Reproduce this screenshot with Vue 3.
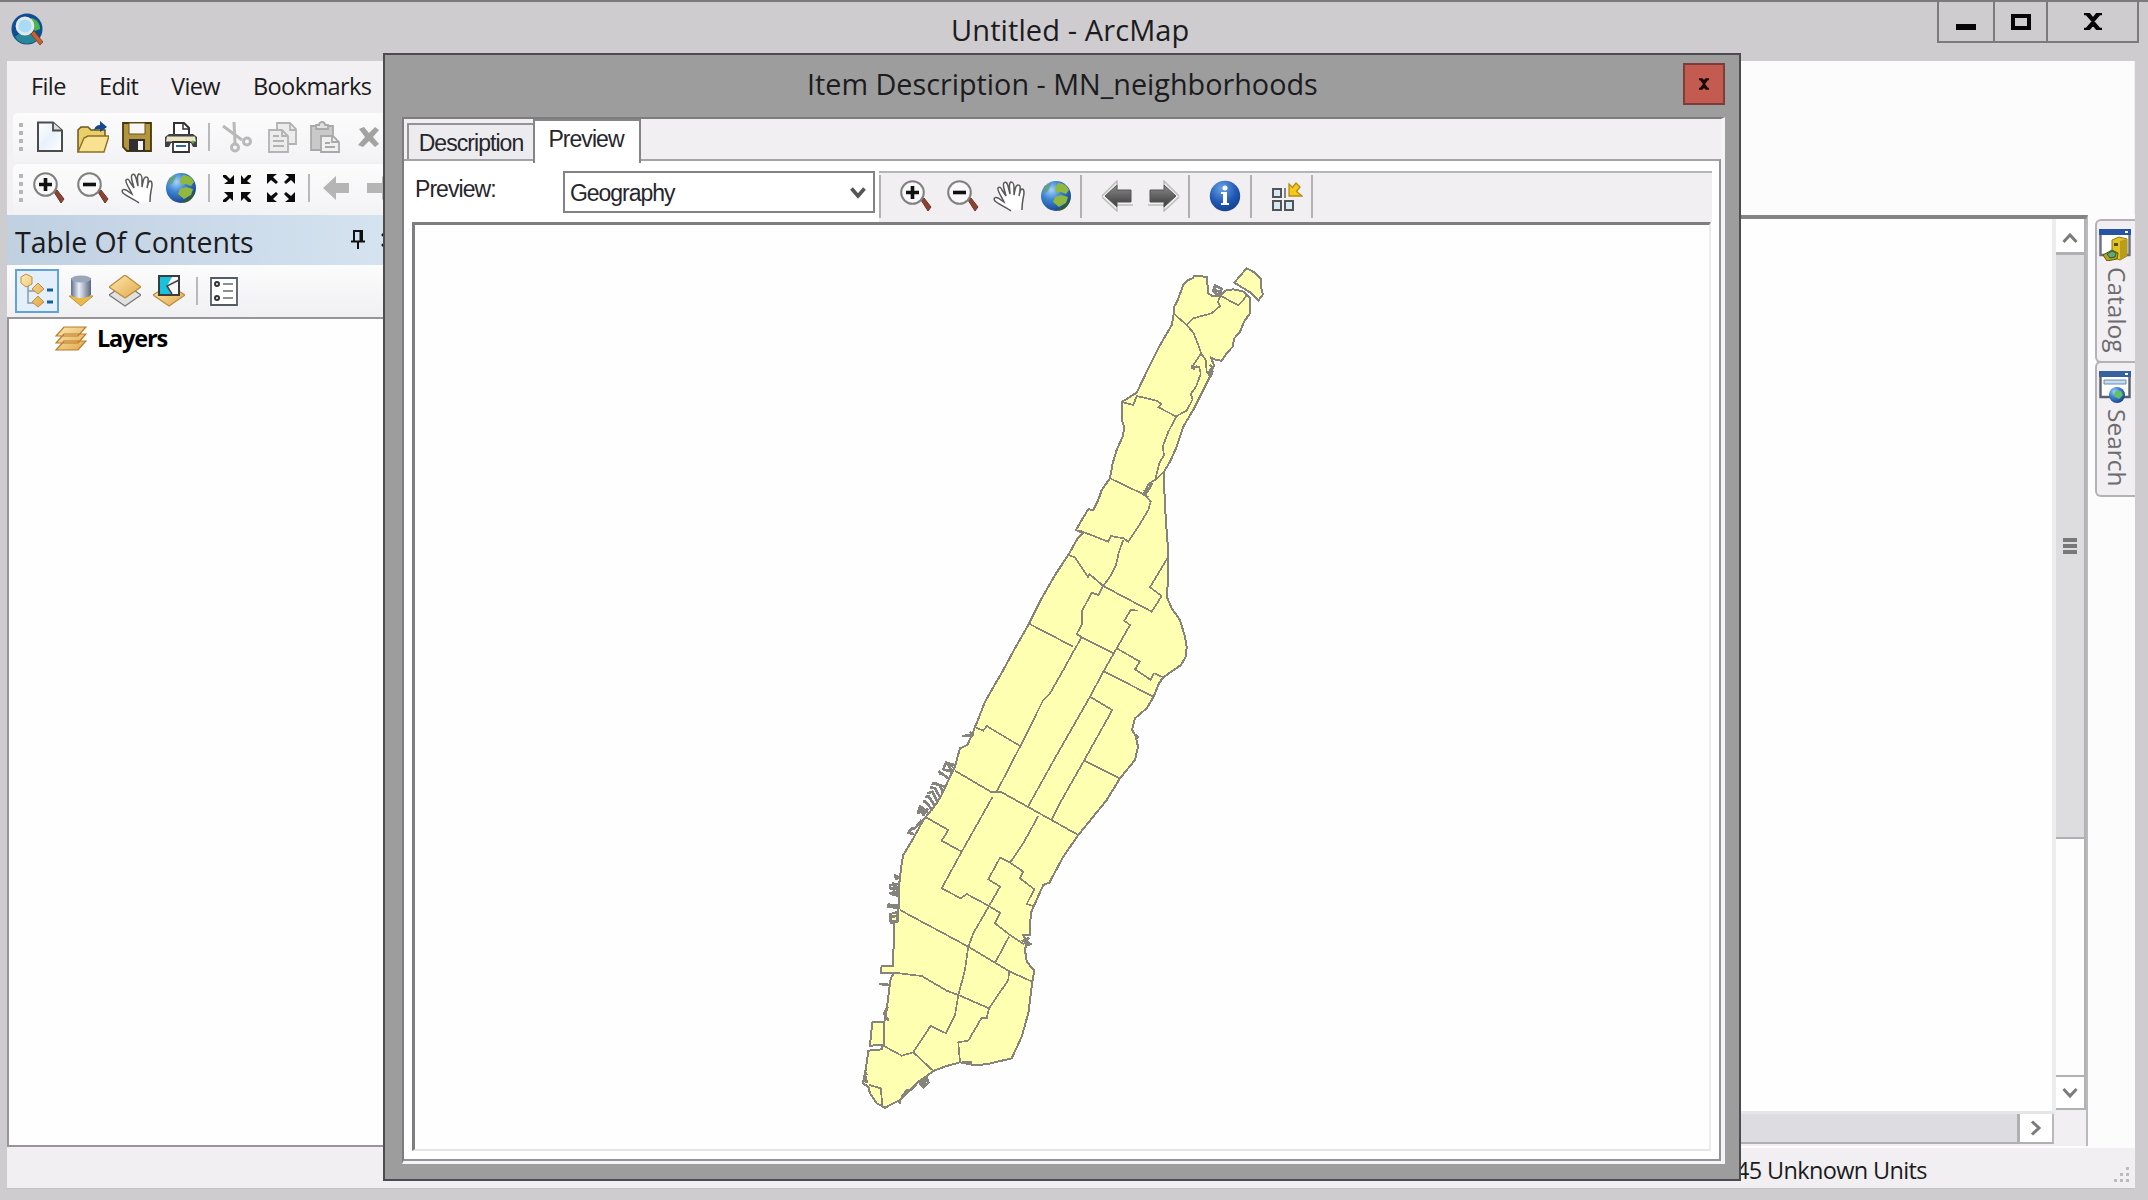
<script setup>
const at = (ox, oy, list) => {
  const n = list.trim().split(/[\s,]+/).map(Number)
  const out = []
  for (let i = 0; i < n.length; i += 2) out.push((ox + n[i] / 3).toFixed(1) + ',' + (oy + n[i + 1] / 3).toFixed(1))
  return out.join(' ')
}
const north = (s) => at(1040, 250, s)
const mid = (s) => at(960, 500, s)
const south = (s) => at(840, 760, s)

const island = [
  north('400,200 403,170 413,150 430,105 445,90 458,85 462,78 500,80 505,130 515,137 540,137 555,122 580,118 612,125 630,145 630,190 612,215 600,245 583,265 578,290 560,310 545,332 528,330 512,322 522,345 510,380 490,420 465,470 430,530 410,590 390,635 372,665 374,755 380,845 384,895'),
  mid('624,180 624,245 620,290 635,325 660,360 675,410 680,440 677,470 663,495 610,532 597,550 580,592 560,625 525,655 516,690 526,705 534,740 525,780 480,835 440,900'),
  south('780,145 715,225 670,290 628,368 610,375 583,435 572,460 570,525 550,525 560,545 555,570 560,605 583,632 577,665 565,760 545,830 515,895 440,913 400,915 360,907 320,918 280,933 230,970 200,1000 180,1020 135,1043 110,1030 90,1000 85,980 68,970 78,925 85,872 127,868 127,855 90,857 97,787 133,787 140,750 145,710 152,655 162,640 122,640 125,618 158,618 163,520 163,490 152,490 150,462 175,455 178,420 178,370 185,310 190,285 220,235 250,180 270,155 290,130 310,95 330,50 345,20 350,0'),
  mid('0,745 22,735 38,700 45,680 52,665 75,605 95,570 130,510 165,445 205,375 245,295 285,225 325,165 355,112 370,100 348,90 365,60 385,28 400,30'),
  north('175,750 185,720 210,685 218,640 230,600 250,555 252,530 247,515 247,455 290,428 320,365 355,295 395,225')
].join(' ')

const islet = north('620,55 645,68 662,85 665,125 670,132 655,152 635,130 583,98 600,78')

const borders = [
  north('400,190 440,225 460,248 475,285 483,310 497,330 500,365 510,380'),
  north('440,225 460,205 515,190 540,168 534,155 542,137'),
  north('542,137 580,158 595,165 612,148 620,135'),
  north('483,310 460,345 456,355 478,350 482,372 468,410 452,432 458,448 440,482 410,498 385,545 368,590 372,615 358,640 345,690 372,665'),
  north('345,690 325,702 310,735 325,742'),
  north('247,457 280,465 290,438 350,452 365,462 355,472 410,500'),
  north('210,685 315,735 332,755 325,780 295,830 265,875 250,865 212,858 205,875 120,842'),
  mid('490,120 477,155 468,195 450,230 430,258 415,285 395,278 365,335 365,375 350,402 365,412 340,455 310,510 270,580 250,600 180,740 110,875'),
  mid('325,165 345,172 385,232 388,222 430,258 575,335 605,288 570,262 622,175'),
  mid('535,332 512,330 493,362 510,375 470,445 430,515 390,590 290,765 215,900 205,920'),
  mid('205,370 340,440'),
  mid('365,412 460,460'),
  mid('470,445 540,485 525,508 572,540 582,520 610,532'),
  mid('432,514 580,590'),
  mid('390,590 457,630 372,782 305,900 275,960'),
  mid('372,782 480,835'),
  mid('42,680 70,692 80,678 180,738'),
  south('345,32 455,97 485,97 715,225'),
  south('457,112 365,275 305,385 362,415 380,402 447,438 480,380 445,358 480,293 510,308 550,335 540,355 583,388 560,432 580,438'),
  south('595,168 550,250 510,308'),
  south('258,172 325,210 305,242 365,275'),
  south('180,450 385,560 510,635 577,665'),
  south('447,438 480,458 465,490 510,525 550,552 568,545'),
  south('507,530 467,605'),
  south('447,438 400,520 385,560 375,630 355,705 345,765 318,820 272,797 220,877 185,887 130,857'),
  south('162,638 245,648 320,692 355,705 447,745 505,660 507,636'),
  south('447,745 440,775 425,773 385,842 355,847 360,907'),
  south('220,877 280,933'),
  south('88,975 122,985 127,1035'),
  south('133,787 132,855')
]

const piers = [
  north('520,125 525,107 545,117 535,137 518,120 545,125'),
  north('510,345 517,352 505,370 517,365 510,382'),
  north('455,345 462,357 456,352 470,350'),
  north('320,705 335,702 315,735 328,715 312,725'),
  mid('5,708 38,706 30,695'),
  mid('525,702 534,712 524,714'),
  south('345,15 318,8 310,28 335,35 325,15 340,20'),
  south('325,55 298,35 303,45'), south('318,82 280,68'), south('308,98 300,75 275,70'),
  south('300,112 285,85 270,82'), south('292,125 277,95 262,100'), south('285,138 265,108 255,112'),
  south('278,152 257,125 250,125'), south('265,160 240,138 235,158 262,148 250,165 240,145'),
  south('245,180 225,205 215,205 205,218 222,222'),
  south('178,355 165,345 170,360'), south('178,372 150,375 150,385 175,385 160,370 175,395 150,400 178,408'),
  south('175,395 160,405 165,375'), south('178,437 145,434 145,440 175,443'),
  south('172,460 172,485 152,485 150,470 170,468'),
  south('118,672 150,675'), south('143,740 133,760 145,782'),
  south('545,545 565,535 555,550 572,552 560,556'),
  south('235,965 260,955 265,968 250,982 240,970 262,960 245,975'),
  south('230,970 215,988 200,992 185,1012'), south('70,960 80,965 75,945 82,940'),
  south('175,1025 183,1030'), south('365,907 395,908')
]

const fileTools = ['new', 'open', 'save', 'print', '|', 'cut', 'copy', 'paste', 'del']
const navTools = ['zin', 'zout', 'hand', 'globe', '|', 'shrink', 'grow', '|', 'backoff', 'fwdoff']
const dlgTools = ['zin', 'zout', 'hand', 'globe', '|', 'back', 'fwd', '|', 'info', '|', 'thumb', '|']
</script>

<template>
  <div class="app">
    <svg class="defs" width="0" height="0">
      <defs>
        <radialGradient id="gGlobe" cx=".35" cy=".3" r=".8"><stop offset="0" stop-color="#a6d4fb" /><stop offset=".4" stop-color="#3f86d6" /><stop offset="1" stop-color="#123a80" /></radialGradient>
        <radialGradient id="gInfo" cx=".4" cy=".25" r=".85"><stop offset="0" stop-color="#6aa3e6" /><stop offset=".55" stop-color="#2159b4" /><stop offset="1" stop-color="#123a86" /></radialGradient>
        <linearGradient id="gYel" x1="0" y1="0" x2="1" y2="1"><stop offset="0" stop-color="#fce9b0" /><stop offset="1" stop-color="#e3a84a" /></linearGradient>
        <linearGradient id="gArr" x1="0" y1="0" x2="0" y2="1"><stop offset="0" stop-color="#8a8a8a" /><stop offset="1" stop-color="#3a3a3a" /></linearGradient>
        <linearGradient id="gCyl" x1="0" y1="0" x2="1" y2="0"><stop offset="0" stop-color="#5f6e8c" /><stop offset=".4" stop-color="#eaf0f8" /><stop offset="1" stop-color="#59667f" /></linearGradient>
        <linearGradient id="gPage" x1="0" y1="0" x2="1" y2="1"><stop offset="0" stop-color="#fff" /><stop offset=".5" stop-color="#e8f1fc" /><stop offset="1" stop-color="#fff" /></linearGradient>

        <symbol id="i-new" viewBox="0 0 32 32"><path d="M5 1.500h15l9 8v20.500H5z" fill="url(#gPage)" stroke="#4c4c4c" stroke-width="2" /><path d="M20 1.500v8h9" fill="#ddd" stroke="#4c4c4c" stroke-width="1.800" /></symbol>
        <symbol id="i-open" viewBox="0 0 32 32"><path d="M1 31V9l3-3h7l3 3h14v6" fill="#e9cf6a" stroke="#6b5618" stroke-width="1.500" /><path d="M1 31 7 17l4-2h21l-5 16z" fill="#f8e292" stroke="#8a7024" stroke-width="1.400" /><path d="M17 9c1-4 4-5 6-5V0l7 6-7 5V8c-2 0-4 0-6 1z" fill="#15498c" /></symbol>
        <symbol id="i-save" viewBox="0 0 32 32"><path d="M2 2h28v28H6l-4-4z" fill="#b3953f" stroke="#47370d" stroke-width="1.800" /><path d="M8 2h16v11H8z" fill="#f6f6f6" stroke="#6b5618" /><path d="M8 18h16v12H8z" fill="#2e2e33" /><path d="M17 20h5v9h-5z" fill="#f3f3f3" /></symbol>
        <symbol id="i-print" viewBox="0 0 32 32"><path d="M9 14V2h10l5 5v7" fill="#fff" stroke="#333" stroke-width="2" /><path d="M18 2v6h5" fill="none" stroke="#333" stroke-width="1.500" /><path d="M4 13h24l4 3v10h-4l-2-4H6l-2 4H0V16z" fill="#3d4148" /><path d="M2 15.500h28l1 5H1z" fill="#ece6c3" /><path d="M8 21h16v10H8z" fill="#fff" stroke="#333" stroke-width="1.800" /><path d="M11 25h10" stroke="#2f66a8" stroke-width="2" /><circle cx="28" cy="21" r="1.500" fill="#58b543" /></symbol>
        <symbol id="i-cut" viewBox="0 0 32 32"><g fill="none" stroke="#b9b9b9" stroke-width="3"><path d="m2 5 19 14M13 1l1 21" /><circle cx="14" cy="26.500" r="3.500" /><circle cx="26" cy="20.500" r="3.500" /></g></symbol>
        <symbol id="i-copy" viewBox="0 0 32 32"><g fill="#ececec" stroke="#b3b3b3" stroke-width="1.800"><path d="M12 2h13l6 6v15H12z" /><path d="M4 9h13l6 6v16H4z" /><path d="M25 2v7h6M17 9v6h6M8 15h6M8 20h11M8 25h11" fill="none" /></g></symbol>
        <symbol id="i-paste" viewBox="0 0 32 32"><g fill="#c9c9c9" stroke="#a9a9a9" stroke-width="1.800"><path d="M2 5h22v24H2z" /><path d="M7 8V4h3c0-4 6-4 6 0h3v4z" fill="#e2e2e2" /><path d="M12 15h12l6 6v10H12z" fill="#f0f0f0" /><path d="M23 15v6h6M16 22h5M16 26h10" fill="none" /></g></symbol>
        <symbol id="i-del" viewBox="0 0 32 32"><path d="m6 8 5-2 5 6 6-6 4 3-6 7 6 7-4 3-6-6-6 6-5-2 7-8z" fill="#a3a3a3" /></symbol>
        <symbol id="i-zin" viewBox="0 0 32 32"><path d="m21 20 3-2 7 9-3 4z" fill="#8c4334" stroke="#6e3528" /><circle cx="12.500" cy="12.500" r="11.300" fill="#f8f8f8" stroke="#808080" stroke-width="2" /><path d="M12.500 6v13M6 12.500h13" stroke="#111" stroke-width="3.600" /></symbol>
        <symbol id="i-zout" viewBox="0 0 32 32"><path d="m21 20 3-2 7 9-3 4z" fill="#8c4334" stroke="#6e3528" /><circle cx="12.500" cy="12.500" r="11.300" fill="#f8f8f8" stroke="#808080" stroke-width="2" /><path d="M6 12.500h13" stroke="#111" stroke-width="3.600" /></symbol>
        <symbol id="i-hand" viewBox="0 0 32 32"><path d="M18 31C14 28 7 25 2 21c-2-3 0-4 3-3l6 4C9 17 4 11 5 8c2-2 3 0 4 2l4 6C12 11 9 5 11 3c2-2 3 0 4 3l2 8c0-5-2-11 1-12 2 0 3 3 3 5v8c1-4 1-10 4-10s2 3 2 6l-1 5c1-3 1-7 3-7 3 0 2 6 1 10-1 5-1 6-1 11" fill="#fff" stroke="#5a5a5a" stroke-width="1.500" /></symbol>
        <symbol id="i-globe" viewBox="0 0 32 32"><circle cx="16" cy="16" r="15" fill="url(#gGlobe)" /><path d="M18 3c6 0 9 3 11 7l-3 4-5-2-5 1-1-5zM15 17l6-2 7 2-2 6-7 4-6-5z" fill="#8fb93e" /><path d="M4 6l8-3-4 8-5 3z" fill="#5c9b6a" opacity=".7" /><path d="M18 29c6-2 9-6 11-10 2 3-3 12-11 12z" fill="#395f21" opacity=".8" /></symbol>
        <symbol id="i-shrink" viewBox="0 0 32 32"><g fill="#0a0a0a"><path d="M2 3h3l4 4 4-4v9H3l4-3-5-4zM30 3h-3l-4 4-3-4v9h10l-4-3 4-4zM2 30h3l4-4 3 3v-9H3l4 4-5 4zM30 30h-3l-4-4-3 3v-9h10l-4 4 4 4z" /></g></symbol>
        <symbol id="i-grow" viewBox="0 0 32 32"><g fill="#0a0a0a"><path d="M2 2h10L8 5l5 5-2 2-5-4-4 4zM30 2H20l4 3-5 5 2 2 5-4 4 4zM2 30h10l-4-3 5-5-2-2-5 4-4-4zM30 30H20l4-3-5-5 2-2 5 4 4-4z" /></g></symbol>
        <symbol id="i-backoff" viewBox="0 0 32 32"><path d="M2 16 15 4v7h13v10H15v7z" fill="#b5b5b5" /></symbol>
        <symbol id="i-fwdoff" viewBox="0 0 32 32"><path d="M30 16 17 4v7H2v10h15v7z" fill="#b5b5b5" /></symbol>
        <symbol id="i-back" viewBox="0 0 32 32"><path d="M1 16 16 1v7M16 27v4L1 17M14 25h18" fill="none" stroke="#bdbdbd" stroke-width="1.500" /><path d="M4 16 16 5v5h14v12H16v5z" fill="url(#gArr)" stroke="#555" /></symbol>
        <symbol id="i-fwd" viewBox="0 0 32 32"><path d="M31 16 16 1v4M31 17 16 31v-6H0" fill="none" stroke="#bdbdbd" stroke-width="1.500" /><path d="M28 16 16 5v5H2v12h14v5z" fill="url(#gArr)" stroke="#555" /></symbol>
        <symbol id="i-info" viewBox="0 0 32 32"><circle cx="16" cy="16" r="15.200" fill="url(#gInfo)" /><circle cx="16" cy="8" r="2.500" fill="#fff" /><path d="M12 12h6v11h2v2h-8v-2h2v-9h-2z" fill="#fff" /></symbol>
        <symbol id="i-thumb" viewBox="0 0 32 32"><g fill="#d6e8f2" stroke="#50555c" stroke-width="2"><path d="M2 9h8v8H2zM2 21h8v9H2zM14 21h8v9h-8z" /></g><path d="M14 8v10" stroke="#666" stroke-width="1.600" /><path d="M18 16V4l3.500 3.500L25 3l4 4-3.500 4.500L31 16z" fill="#f5c81c" stroke="#b78c0d" stroke-width="1.300" /></symbol>
        <symbol id="i-tree" viewBox="0 0 36 36"><path d="M9 12v18h10M9 18h10" fill="none" stroke="#8d99a8" stroke-width="1.500" /><g fill="url(#gYel)" stroke="#c18f3b"><path d="m7 1 6 3v7l-6 3-5-4V4zM19 10l6 6-6 5-6-5zM19 23l6 6-6 5-6-5z" /></g><path d="M28 17h6M28 29h6" stroke="#14609f" stroke-width="3" /></symbol>
        <symbol id="i-source" viewBox="0 0 32 32"><path d="M4 21h24L16 31z" fill="#eab94e" stroke="#c2953b" /><path d="M6 3v17c4 4 16 4 20 0V3z" fill="url(#gCyl)" /><ellipse cx="16" cy="4" rx="10" ry="3.500" fill="#9aa6ba" /></symbol>
        <symbol id="i-vis" viewBox="0 0 32 32"><path d="M0 20 16 9l16 11-16 11z" fill="#e2e2e0" stroke="#777" stroke-width="1.300" /><path d="M0 12 16 0l16 12-16 11z" fill="url(#gYel)" stroke="#b98d3d" stroke-width="1.300" /></symbol>
        <symbol id="i-sel" viewBox="0 0 32 32"><path d="M0 20 16 10l16 10-16 11z" fill="url(#gYel)" stroke="#b98d3d" stroke-width="1.300" /><path d="M6 1h20v19H6z" fill="#f7f7f7" stroke="#3c3c3c" stroke-width="2" /><path d="M7 2h12l-5 9 5 8H7z" fill="#19c2dc" /><path d="m26 5-12 6 5 8" fill="none" stroke="#444" stroke-width="1.500" /></symbol>
        <symbol id="i-opts" viewBox="0 0 32 32"><path d="M3 3h26v27H3z" fill="#fff" stroke="#555b66" stroke-width="1.800" /><g fill="none" stroke="#30343c" stroke-width="2"><circle cx="9" cy="9" r="2" /><circle cx="9" cy="23" r="2" /></g><path d="M15 9h10M15 16h10M15 23h10" stroke="#8a8f98" stroke-width="2" /></symbol>
        <symbol id="i-layers" viewBox="0 0 32 28"><g fill="url(#gYel)" stroke="#b87a2e" stroke-width="1.200"><path d="m1 25 8-9h22l-8 9zM1 18l8-9h22l-8 9zM1 11l8-9h22l-8 9z" /></g></symbol>
        <symbol id="i-app" viewBox="0 0 34 34"><circle cx="16" cy="16" r="15.500" fill="#0e4f93" /><path d="M4 24c6 9 17 8 23 2l-6-5-12-1z" fill="#3fae9a" opacity=".6" /><path d="M20 5c6 1 9 6 9 11l-5 2-4-6z" fill="#4cb548" /><path d="m20 21 3-3 9 11-3 3z" fill="#c9632b" stroke="#7c3b1a" stroke-width=".8" /><circle cx="14" cy="13" r="8" fill="#a9dcf4" stroke="#e4e8ea" stroke-width="2.800" /></symbol>
        <symbol id="i-cat" viewBox="0 0 32 32"><path d="M1.500 1.500h29V26H1.500z" fill="#fff" stroke="#6a7080" stroke-width="2.400" /><path d="M0 0h32v6H0z" fill="#2554a5" /><path d="M26 2h3v2h-3z" fill="#fff" /><path d="m13 11 7-3 8 2v17l-7 4-8-3z" fill="#e2c321" stroke="#8e7814" /><path d="M21 12l7-2v17l-7 4z" fill="#b99c17" /><path d="M15 14h4v3h-4z" fill="#5c4d0b" /><path d="m4 26 9-5 6 3-1 6-10 2z" fill="#b7a319" stroke="#5e5711" /><path d="m8 25 5-3 4 2-1 4-5 1z" fill="#5da878" stroke="#2d5b32" /></symbol>
        <symbol id="i-find" viewBox="0 0 32 32"><path d="M1.500 1.500h29V26H1.500z" fill="#fff" stroke="#596070" stroke-width="2.400" /><path d="M0 0h32v6H0z" fill="#35619f" /><path d="M26 2h3v2h-3z" fill="#fff" /><path d="M5 9h22v4H5z" fill="#c3dcf0" stroke="#708ba8" /><circle cx="18" cy="24" r="8" fill="url(#gGlobe)" /><path d="m16 20 6 0 2 4-4 4-5-3z" fill="#62c163" /></symbol>
      </defs>
    </svg>

    <header class="titlebar">
      <svg class="logo"><use href="#i-app" /></svg>
      <h1 class="apptitle">Untitled - ArcMap</h1>
      <div class="winbtns">
        <span class="wb min"><i></i></span><span class="wb max"><i></i></span>
        <span class="wb cls"><svg width="20" height="17" viewBox="0 0 20 17"><path d="M1 1h5l4 5 4-5h5M1 16h5l4-5 4 5h5M3.500 1l13 15M16.500 1l-13 15" fill="none" stroke="#050505" stroke-width="2.600" /></svg></span>
      </div>
    </header>

    <main class="body">
      <section class="left">
        <nav class="menu"><span>File</span><span>Edit</span><span>View</span><span>Bookmarks</span></nav>
        <div class="bar">
          <i class="grip"></i>
          <template v-for="(t, k) in fileTools" :key="k"><i v-if="t === '|'" class="sep"></i><span v-else class="cell"><svg class="ic"><use :href="'#i-' + t" /></svg></span></template>
        </div>
        <div class="bar second">
          <i class="grip"></i>
          <template v-for="(t, k) in navTools" :key="k"><i v-if="t === '|'" class="sep"></i><span v-else class="cell"><svg class="ic"><use :href="'#i-' + t" /></svg></span></template>
        </div>
        <div class="tochead">
          <span class="toctitle">Table Of Contents</span>
          <svg class="pin" width="14" height="20" viewBox="0 0 14 20"><path d="M3 11V1h8v10M0 11.500h14M7 12v7M9.500 1v10" fill="none" stroke="#111" stroke-width="2" /></svg>
          <svg class="tocx" width="14" height="14" viewBox="0 0 14 14"><path d="m1 1 12 12M13 1 1 13" stroke="#111" stroke-width="2.500" /></svg>
        </div>
        <div class="toctools">
          <span class="cell on"><svg class="ic tree"><use href="#i-tree" /></svg></span>
          <span class="cell"><svg class="ic"><use href="#i-source" /></svg></span>
          <span class="cell"><svg class="ic"><use href="#i-vis" /></svg></span>
          <span class="cell"><svg class="ic"><use href="#i-sel" /></svg></span>
          <i class="sep"></i>
          <span class="cell"><svg class="ic"><use href="#i-opts" /></svg></span>
        </div>
        <div class="toclist"><svg class="lay"><use href="#i-layers" /></svg><b>Layers</b></div>
      </section>

      <section class="right">
        <div class="blank"></div>
        <div class="work">
          <div class="frame">
            <div class="viewrow">
              <div class="mapview"></div>
              <div class="vscroll">
                <div class="sbtn"><svg width="16" height="12" viewBox="0 0 16 12"><path d="m1.500 10 6.500-7 6.500 7" fill="none" stroke="#7b7b7b" stroke-width="3" /></svg></div>
                <div class="vthumb"><i></i><i></i><i></i></div>
                <div class="vtrack"></div>
                <div class="sbtn bot"><svg width="16" height="12" viewBox="0 0 16 12"><path d="m1.500 2 6.500 7 6.500-7" fill="none" stroke="#7b7b7b" stroke-width="3" /></svg></div>
              </div>
            </div>
            <div class="hscroll"><div class="hthumb"></div><div class="hbtn"><svg width="12" height="16" viewBox="0 0 12 16"><path d="m2 1.500 7 6.500-7 6.500" fill="none" stroke="#7b7b7b" stroke-width="3" /></svg></div></div>
          </div>
          <aside class="tabs">
            <div class="vtab cat"><svg class="ic"><use href="#i-cat" /></svg><span>Catalog</span></div>
            <div class="vtab find"><svg class="ic"><use href="#i-find" /></svg><span>Search</span></div>
          </aside>
        </div>
      </section>
    </main>
    <footer class="status">
      <span class="units">45 Unknown Units</span>
      <svg class="size" width="16" height="16" viewBox="0 0 16 16"><path d="M12 0h3v3h-3zM12 6h3v3h-3zM6 6h3v3H6zM12 12h3v3h-3zM6 12h3v3H6zM0 12h3v3H0z" fill="#bdbbbe" /></svg>
    </footer>

    <div class="dialog">
      <div class="dtitle">
        <h2>Item Description - MN_neighborhoods</h2>
        <span class="dclose"><svg width="12" height="12" viewBox="0 0 12 12"><path d="M1 1.200h3l2 2.500 2-2.500h3M1 10.800h3l2-2.500 2 2.500h3M2.500 1l7 10M9.500 1l-7 10" fill="none" stroke="#180b0a" stroke-width="2" /></svg></span>
      </div>
      <div class="client">
        <div class="dtabs"><span class="dt off">Description</span><span class="dt act">Preview</span></div>
        <div class="pane">
          <div class="prow">
            <label>Preview:</label>
            <div class="combo"><span>Geography</span><svg width="16" height="13" viewBox="0 0 16 13"><path d="M1.500 1.500 8 9l6.500-7.500" fill="none" stroke="#555" stroke-width="3.600" /></svg></div>
            <div class="dtools">
              <i class="dsep"></i>
              <template v-for="(t, k) in dlgTools" :key="k"><i v-if="t === '|'" class="dsep"></i><span v-else class="dcell"><svg class="ic"><use :href="'#i-' + t" /></svg></span></template>
            </div>
          </div>
          <div class="geo">
            <svg class="map" viewBox="415 225 1295 924">
              <g stroke="#85837b" stroke-width="2" stroke-linejoin="round" shape-rendering="crispEdges">
                <polygon :points="island" fill="#ffffb1" />
                <polygon :points="islet" fill="#ffffb1" />
                <polyline v-for="(b, k) in borders" :key="'b' + k" :points="b" fill="none" stroke-width="1.700" />
                <polyline v-for="(b, k) in piers" :key="'p' + k" :points="b" fill="none" stroke-width="2.600" />
              </g>
            </svg>
          </div>
        </div>
      </div>
    </div>
  </div>
</template>

<style>
body { margin: 0; overflow: hidden; }
</style>
<style scoped>
* { box-sizing: border-box; }
.app { position: relative; width: 2148px; height: 1200px; background: #cecccf; border-top: 2px solid #7c7a7d; display: flex; flex-direction: column; font-family: "Open Sans", "Noto Sans", sans-serif; color: #1b1b20; overflow: hidden; }
.defs { position: absolute; }
.ic { width: 32px; height: 32px; display: block; overflow: visible; }
.titlebar { height: 59px; flex: none; display: flex; align-items: flex-start; }
.logo { width: 34px; height: 34px; margin: 11px 0 0 11px; }
.apptitle { margin: 8px 0 0 906px; font-size: 29px; line-height: 40px; font-weight: 400; white-space: nowrap; width: 300px; letter-spacing: .1px; }
.winbtns { margin-left: auto; margin-right: 9px; display: flex; height: 41px; border: 2px solid #7c7a7f; border-top: 0; }
.wb { display: flex; align-items: center; justify-content: center; border-left: 2px solid #7c7a7f; }
.wb:first-child { border-left: 0; }
.min { width: 54px; }
.min i { width: 20px; height: 6px; background: #050505; margin-top: 10px; }
.max { width: 53px; }
.max i { width: 20px; height: 16px; border: 4px solid #050505; }
.cls { width: 91px; }
.body { flex: none; height: 1087px; display: flex; margin: 0 13px 0 7px; }
.left { width: 377px; background: #f2f0f2; display: flex; flex-direction: column; overflow: hidden; flex: none; }
.menu { height: 52px; flex: none; display: flex; align-items: center; padding: 0 0 2px 24px; font-size: 23.500px; letter-spacing: -.6px; white-space: nowrap; }
.menu span:nth-child(1) { width: 68px; }
.menu span:nth-child(2) { width: 72px; }
.menu span:nth-child(3) { width: 82px; }
.bar { height: 49px; flex: none; margin-left: 6px; padding-bottom: 1px; display: flex; align-items: center; background: linear-gradient(#fcfcfd, #f3f2f4); border-radius: 5px 0 0 5px; }
.second { margin-top: 2px; height: 51px; padding-bottom: 3px; }
.grip { flex: none; width: 4px; height: 28px; margin: 0 4px 0 6px; background: repeating-linear-gradient(#b6b5b8 0 4px, transparent 4px 8px); }
.cell { width: 44px; height: 44px; flex: none; display: flex; align-items: center; justify-content: center; }
.sep { width: 2px; height: 28px; flex: none; margin: 0 5px; background: #b9b8bb; }
.tochead { height: 50px; flex: none; background: linear-gradient(90deg, #bfd0e1, #d5e3f0); display: flex; align-items: center; padding-left: 8px; }
.toctitle { flex: none; font-size: 28.500px; white-space: nowrap; width: 336px; line-height: 44px; padding-top: 3px; }
.pin { flex: none; margin-top: 0; }
.tocx { flex: none; margin: 0 0 0 16px; }
.toctools { height: 52px; flex: none; display: flex; align-items: center; padding-left: 8px; background: linear-gradient(#fcfcfd, #f0eff1); }
.toctools .sep { margin: 0 4px 0 5px; }
.on { background: #e3effa; border: 2px solid #62a2d8; }
.tree { width: 36px; height: 36px; }
.toclist { flex: 1; border: 2px solid #979599; border-right: 0; background: #fefefe; padding: 5px 0 0 46px; display: flex; align-items: flex-start; margin-bottom: 1px; }
.toclist b { font-size: 23.500px; line-height: 28px; margin-left: 10px; letter-spacing: -1.200px; color: #000; }
.lay { width: 32px; height: 28px; margin-top: 1px; flex: none; }
.right { flex: 1; background: #fcfcfd; display: flex; flex-direction: column; }
.blank { height: 154px; flex: none; border-right: 1px solid #eee; }
.work { flex: 1; display: flex; }
.frame { width: 1704px; display: flex; flex-direction: column; border-top: 4px solid #848386; border-right: 2px solid #bab9bc; height: 931px; background: #f1eff1; }
.viewrow { height: 895px; display: flex; }
.mapview { width: 1672px; background: #fefefe; border-right: 4px solid #eceeee; border-bottom: 3px solid #e5e7e7; }
.vscroll { width: 30px; margin-bottom: 4px; border-right: 2px solid #b2b1b4; display: flex; flex-direction: column; }
.sbtn { height: 33px; padding-top: 4px; background: #fff; display: flex; align-items: center; justify-content: center; flex: none; }
.bot { height: 35px; padding: 0; border-top: 2px solid #b2b1b4; border-bottom: 2px solid #b2b1b4; }
.vthumb { height: 587px; flex: none; background: #dddcde; border: 2px solid #b0afb1; border-width: 3px 0 2px; display: flex; flex-direction: column; align-items: center; justify-content: center; gap: 2px; padding-bottom: 1px; }
.vthumb i { width: 14px; height: 4px; background: #78777a; }
.vtrack { flex: 1; background: #fdfdfe; }
.hscroll { height: 30px; display: flex; width: 1670px; border-right: 2px solid #b9b8bb; border-bottom: 2px solid #b0afb2; }
.hthumb { flex: 1; background: #dddce0; border-right: 3px solid #b0afb2; }
.hbtn { width: 32px; background: #fff; display: flex; align-items: center; justify-content: center; }
.tabs { margin-left: auto; width: 40px; padding-top: 4px; }
.vtab { width: 40px; background: #f1eff1; border: 2px solid #b4b2b5; border-right: 0; border-radius: 6px 0 0 6px; display: flex; flex-direction: column; align-items: flex-start; padding: 8px 0 0 2px; color: #6c6b70; }
.cat { height: 144px; }
.find { height: 136px; margin-top: -2px; }
.vtab span { writing-mode: vertical-rl; font-size: 24.500px; line-height: 30px; margin: 6px 0 0 3px; white-space: nowrap; }
.status { flex: none; height: 41px; margin: 0 13px 0 7px; background: #f1eff1; border-bottom: 1px solid #c0c2c3; display: flex; align-items: center; }
.units { margin-left: 1729px; font-size: 23.500px; white-space: nowrap; letter-spacing: -.65px; padding-top: 3px; }
.size { margin: 14px 5px 0 auto; }
.dialog { position: absolute; left: 383px; top: 51px; width: 1358px; height: 1128px; background: #9d9d9d; border: 2px solid #4c4b4e; padding: 0 14px 13px 17px; }
.dtitle { height: 62px; display: flex; position: relative; justify-content: flex-end; padding-top: 8px; }
.dtitle h2 { position: absolute; left: 405px; top: 7px; margin: 0; font-size: 28.750px; line-height: 44px; font-weight: 400; white-space: nowrap; }
.dclose { width: 42px; height: 42px; margin-right: 0; background: #c45b50; border: 2px solid #7a3d38; display: flex; align-items: center; justify-content: center; }
.client { height: 1047px; background: #f1eff1; border: 2px solid #7e7c7f; border-right: 4px solid #f4f3f5; border-bottom: 4px solid #f4f3f5; font-family: "Liberation Sans", Arial, sans-serif; display: flex; flex-direction: column; }
.dtabs { height: 40px; display: flex; align-items: flex-end; flex: none; padding-left: 3px; }
.dt { font-size: 23px; display: flex; align-items: center; justify-content: center; color: #26262c; letter-spacing: -.95px; }
.off { width: 126px; height: 36px; background: #ecebed; border: 2px solid #939295; border-width: 2px 0 0 2px; padding-top: 2px; }
.act { width: 108px; height: 44px; background: #fff; border: 2px solid #858487; border-bottom: 0; margin-bottom: -4px; z-index: 1; padding: 0 2px 5px 0; }
.pane { flex: 1; background: #fff; border-top: 2px solid #a3a2a5; border-right: 2px solid #939296; border-bottom: 2px solid #939296; padding: 10px 7px 8px 8px; display: flex; flex-direction: column; }
.prow { height: 51px; flex: none; display: flex; }
.prow label { font-size: 23px; width: 151px; padding: 5px 0 0 3px; color: #26262c; letter-spacing: -.95px; }
.combo { width: 312px; height: 42px; border: 2px solid #838285; display: flex; align-items: center; justify-content: space-between; padding: 2px 7px 0 5px; font-size: 23px; color: #26262c; letter-spacing: -1.050px; }
.dtools { flex: 1; margin-left: 4px; border-top: 2px solid #b5b4b7; background: #f1eff1; display: flex; align-items: center; padding-bottom: 3px; }
.dsep { width: 2px; height: 43px; background: #b1b0b3; flex: none; margin-right: 12px; }
.dcell + .dsep { margin-left: 1px; }
.dcell { width: 46.500px; display: flex; align-items: center; justify-content: center; flex: none; }
.geo { flex: 1; border: 3px solid #7e7d80; border-right: 2px solid #ececec; border-bottom: 2px solid #e5e5e5; background: #fefefe; margin-right: 1px; }
.map { width: 1295px; height: 924px; display: block; }
</style>
